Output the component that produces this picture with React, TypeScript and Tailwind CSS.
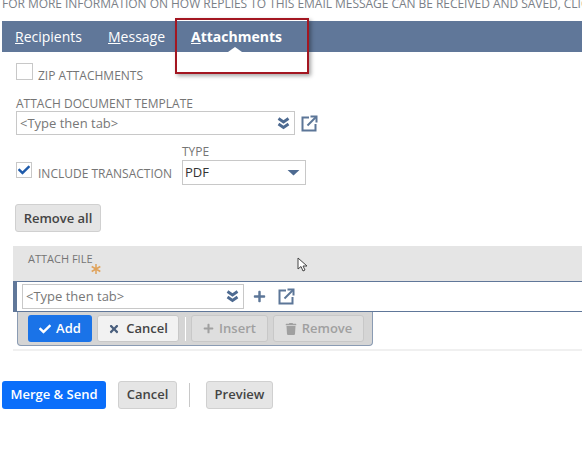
import { FaCheck, FaPlus, FaTimes, FaTrash } from "react-icons/fa"

function ChevronsDown() {
  return (
    <svg width="13" height="13" viewBox="0 0 13 13" className="text-[#4d6a91]" fill="none" stroke="currentColor" strokeWidth="2.8">
      <path d="M1.5 1.5 6.5 5l5-3.5" />
      <path d="M1.5 7 6.5 10.5l5-3.5" />
    </svg>
  )
}

function OpenLink() {
  return (
    <svg width="17" height="17" viewBox="0 0 17 17" className="text-[#5c7698]" fill="none" stroke="currentColor" strokeWidth="2">
      <path d="M8 2.5H1.5v13h13V9" />
      <path d="M6.5 10.5 15 2" />
      <path d="M9.5 1.5h6v6" />
    </svg>
  )
}

function TemplateInput({ className }: { className: string }) {
  return (
    <div className={`flex items-center justify-between border border-[#c8c8c8] bg-white pl-[3px] pr-[4px] text-[13px] text-[#777] ${className}`}>
      <span className="pt-[1px]">&lt;Type then tab&gt;</span>
      <ChevronsDown />
    </div>
  )
}

export default function App() {
  return (
    <div className="relative h-[451px] w-[582px] overflow-hidden bg-white font-['Open_Sans',sans-serif] text-[12px] text-[#757575]">
      <div className="h-[21px] overflow-hidden whitespace-nowrap pl-[2px] text-[12px] leading-[8px] tracking-[-0.04px] text-[#7a8087]">
        FOR MORE INFORMATION ON HOW REPLIES TO THIS EMAIL MESSAGE CAN BE RECEIVED AND SAVED, CLICK HERE
      </div>

      <div className="relative ml-[2px] flex h-[31px] items-center bg-[#607799] pb-[1px] pl-[13px] text-[14px] text-white">
        <span className="w-[93px]"><u>R</u>ecipients</span>
        <span className="w-[83px]"><u>M</u>essage</span>
        <span className="font-bold"><u>A</u>ttachments</span>
        <div className="absolute bottom-0 left-[226px] size-0 border-x-[7px] border-b-[5px] border-x-transparent border-b-white" />
      </div>

      <div className="ml-[16px] mt-[11px] flex h-[17px] items-start gap-[5px]">
        <div className="size-[17px] border border-[#c8c8c8]" />
        <span className="mt-[4px] leading-[17px]">ZIP ATTACHMENTS</span>
      </div>

      <div className="ml-[16px] mt-[16px] leading-[15px]">ATTACH DOCUMENT TEMPLATE</div>
      <div className="ml-[16px] flex items-center gap-[6px]">
        <TemplateInput className="h-[24px] w-[279px]" />
        <OpenLink />
      </div>

      <div className="ml-[16px] mt-[9px] flex items-start">
        <div className="mt-[18px] flex size-[16px] items-center justify-center border border-[#c8c8c8]">
          <FaCheck size={12} className="text-[#1f5bab]" />
        </div>
        <span className="ml-[6px] mt-[21px] w-[144px] whitespace-nowrap leading-[17px]">INCLUDE TRANSACTION</span>
        <div>
          <div className="leading-[16px]">TYPE</div>
          <div className="flex h-[25px] w-[124px] items-center justify-between border border-[#c8c8c8] pl-[2px] pr-[5px] text-[13px] text-[#333]">
            <span>PDF</span>
            <div className="h-[6px] w-[13px] rounded-b-[6px] bg-[#4d6a91] [clip-path:polygon(0_0,100%_0,50%_100%)]" />
          </div>
        </div>
      </div>

      <button className="ml-[15px] mt-[19px] block h-[28px] w-[86px] rounded-[3px] border border-[#d0d0d0] bg-[#e5e5e5] pt-[1px] text-[13px] font-semibold text-[#444]">
        Remove all
      </button>

      <div className="ml-[13px] mt-[14px] h-[105px] border-b-2 border-[#f0f0f0]">
        <div className="relative h-[35px] bg-[#e5e5e5] pl-[15px] pt-[5px] text-[11px] leading-[16px]">
          ATTACH FILE
          <svg className="absolute left-[78px] top-[18px]" width="10" height="10" viewBox="0 0 10 10" fill="none" stroke="#e0a25a" strokeWidth="1.5">
            <path d="M5 0v10M0.7 2.5l8.6 5M9.3 2.5l-8.6 5" />
          </svg>
        </div>
        <div className="flex h-[31px] items-center border-y border-[#607799] border-l-[4px] pl-[5px]">
          <TemplateInput className="h-[25px] w-[222px]" />
          <FaPlus size={13} className="ml-[9px] text-[#5c7698]" />
          <div className="ml-[12px]"><OpenLink /></div>
        </div>
        <div className="ml-[4px] flex h-[34px] w-[356px] items-center rounded-b-[4px] border border-t-0 border-[#8a9bb3] bg-[#d5d5d5] pl-[10px] text-[13px] font-semibold">
          <button className="flex h-[27px] w-[64px] items-center justify-center gap-[5px] rounded-[3px] bg-[#1a73e8] text-white">
            <FaCheck size={12} />Add
          </button>
          <button className="ml-[5px] flex h-[27px] w-[82px] items-center justify-center gap-[6px] rounded-[3px] border border-[#c8c8c8] bg-[#f2f2f2] text-[#444]">
            <FaTimes size={12} className="text-[#4a5f7d]" />Cancel
          </button>
          <div className="ml-[6px] h-[24px] w-px bg-white" />
          <button className="ml-[5px] flex h-[27px] w-[77px] items-center justify-center gap-[5px] rounded-[3px] border border-[#c8c8c8] bg-[#dedede] text-[#a0a0a0]">
            <FaPlus size={11} />Insert
          </button>
          <button className="ml-[5px] flex h-[27px] w-[91px] items-center justify-center gap-[5px] rounded-[3px] border border-[#c8c8c8] bg-[#dedede] text-[#a0a0a0]">
            <FaTrash size={12} />Remove
          </button>
        </div>
      </div>

      <div className="ml-[2px] mt-[30px] flex h-[28px] items-center text-[13px] font-semibold">
        <button className="h-[28px] w-[104px] rounded-[3px] bg-[#0a6efa] text-white">Merge &amp; Send</button>
        <button className="ml-[12px] h-[28px] w-[59px] rounded-[3px] border border-[#d0d0d0] bg-[#e5e5e5] text-[#444]">Cancel</button>
        <div className="ml-[12px] h-[24px] w-px bg-[#c8c8c8]" />
        <button className="ml-[16px] h-[28px] w-[67px] rounded-[3px] border border-[#d0d0d0] bg-[#e5e5e5] text-[#444]">Preview</button>
      </div>

      {/* red annotation box drawn over the screenshot */}
      <div className="absolute left-[175px] top-[18px] h-[56px] w-[134px] border-2 border-[#a31621] shadow-[2px_2px_4px_rgba(0,0,0,0.35)]" />

      {/* mouse pointer */}
      <svg className="absolute left-[297px] top-[257px]" width="11" height="16" viewBox="0 0 11 16" fill="white" stroke="#444" strokeWidth="1">
        <path d="M1 1v11l3-2.5L6 14l2-1-2-4h4z" />
      </svg>
    </div>
  )
}
